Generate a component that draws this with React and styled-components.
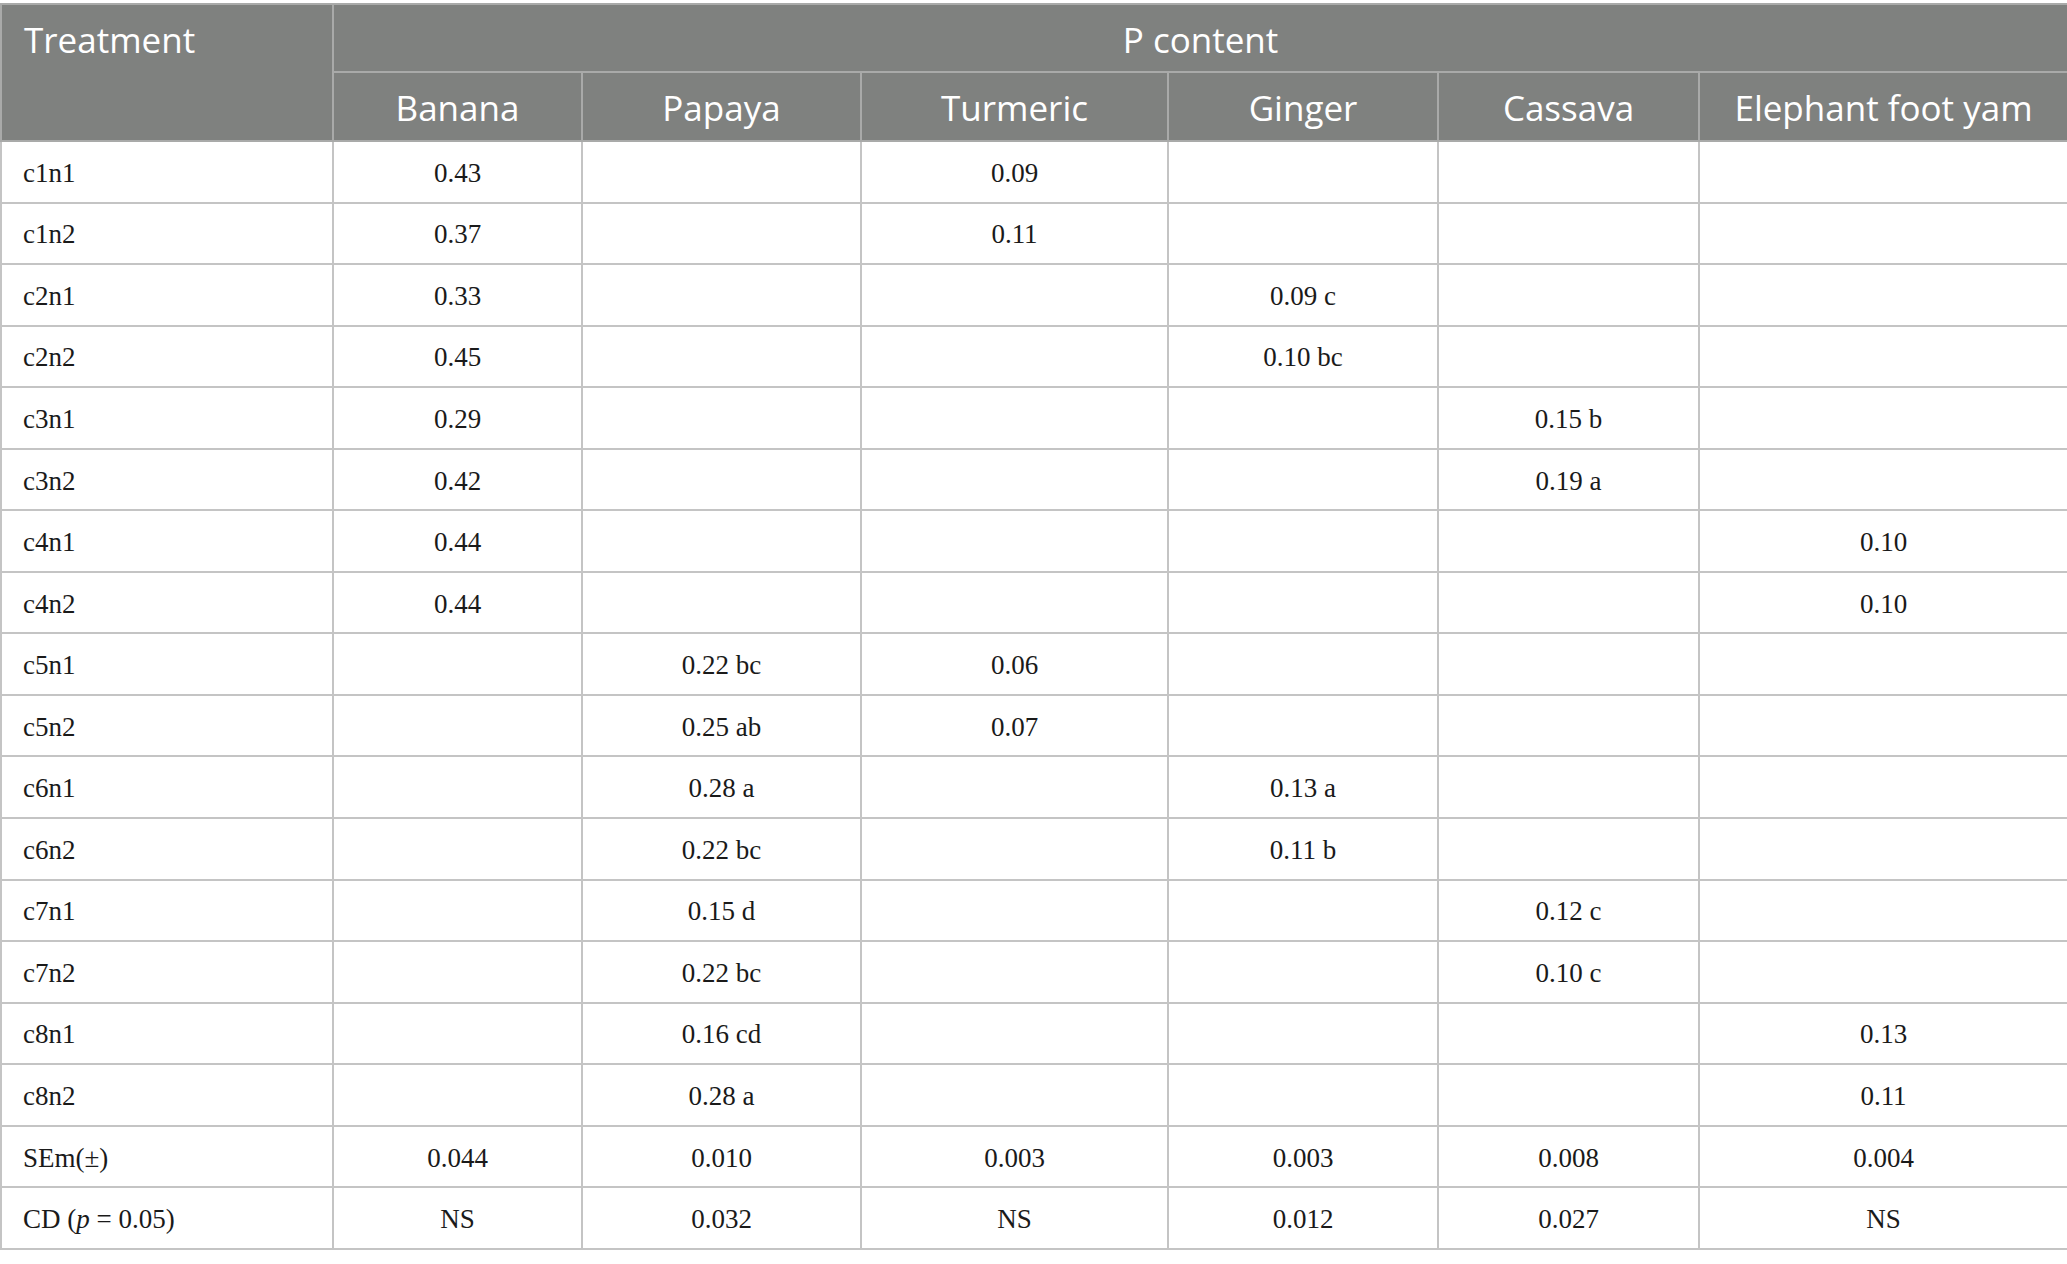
import React from "react";
import styled, { createGlobalStyle } from "styled-components";

const Global = createGlobalStyle`
  html, body { margin: 0; padding: 0; background: #ffffff; }
  body { padding-top: 3px; }
`;

const Table = styled.table`
  width: 2067px;
  border-collapse: collapse;
  table-layout: fixed;
`;

const HeadCell = styled.th`
  background: #7f817f;
  color: #ffffff;
  font-family: "Open Sans", "Noto Sans", sans-serif;
  font-weight: 400;
  font-size: 35px;
  text-align: ${(p) => (p.$left ? "left" : "center")};
  vertical-align: ${(p) => (p.$top ? "top" : "middle")};
  padding: ${(p) => (p.$left ? "11px 22px 0" : "3px 6px 0")};
  border: 2px solid #a9aaa9;
  white-space: nowrap;
  line-height: 48px;
`;

const HeadRow = styled.tr`
  height: ${(p) => p.$h}px;
`;

const Row = styled.tr`
  height: 61.55px;
`;

const Cell = styled.td`
  font-family: "Liberation Serif", "Times New Roman", serif;
  font-size: 27px;
  color: #1a1a1a;
  text-align: ${(p) => (p.$left ? "left" : "center")};
  padding: ${(p) => (p.$left ? "3px 21px 0" : "3px 0 0")};
  border: 2px solid #c4c4c4;
  vertical-align: middle;
  white-space: nowrap;
`;

const cols = [332, 249, 279, 307, 270, 261, 369];
const crops = ["Banana", "Papaya", "Turmeric", "Ginger", "Cassava", "Elephant foot yam"];

const rows = [
  ["c1n1", "0.43", "", "0.09", "", "", ""],
  ["c1n2", "0.37", "", "0.11", "", "", ""],
  ["c2n1", "0.33", "", "", "0.09 c", "", ""],
  ["c2n2", "0.45", "", "", "0.10 bc", "", ""],
  ["c3n1", "0.29", "", "", "", "0.15 b", ""],
  ["c3n2", "0.42", "", "", "", "0.19 a", ""],
  ["c4n1", "0.44", "", "", "", "", "0.10"],
  ["c4n2", "0.44", "", "", "", "", "0.10"],
  ["c5n1", "", "0.22 bc", "0.06", "", "", ""],
  ["c5n2", "", "0.25 ab", "0.07", "", "", ""],
  ["c6n1", "", "0.28 a", "", "0.13 a", "", ""],
  ["c6n2", "", "0.22 bc", "", "0.11 b", "", ""],
  ["c7n1", "", "0.15 d", "", "", "0.12 c", ""],
  ["c7n2", "", "0.22 bc", "", "", "0.10 c", ""],
  ["c8n1", "", "0.16 cd", "", "", "", "0.13"],
  ["c8n2", "", "0.28 a", "", "", "", "0.11"],
  ["SEm(±)", "0.044", "0.010", "0.003", "0.003", "0.008", "0.004"],
  [
    <>CD (<i>p</i> = 0.05)</>,
    "NS", "0.032", "NS", "0.012", "0.027", "NS",
  ],
];

export default function App() {
  return (
    <>
      <Global />
      <Table>
        <colgroup>
          {cols.map((w, i) => (
            <col key={i} style={{ width: w }} />
          ))}
        </colgroup>
        <thead>
          <HeadRow $h={68}>
            <HeadCell rowSpan={2} $left $top>Treatment</HeadCell>
            <HeadCell colSpan={6}>P content</HeadCell>
          </HeadRow>
          <HeadRow $h={69}>
            {crops.map((c) => (
              <HeadCell key={c}>{c}</HeadCell>
            ))}
          </HeadRow>
        </thead>
        <tbody>
          {rows.map((r, i) => (
            <Row key={i}>
              {r.map((v, j) => (
                <Cell key={j} $left={j === 0}>{v}</Cell>
              ))}
            </Row>
          ))}
        </tbody>
      </Table>
    </>
  );
}
